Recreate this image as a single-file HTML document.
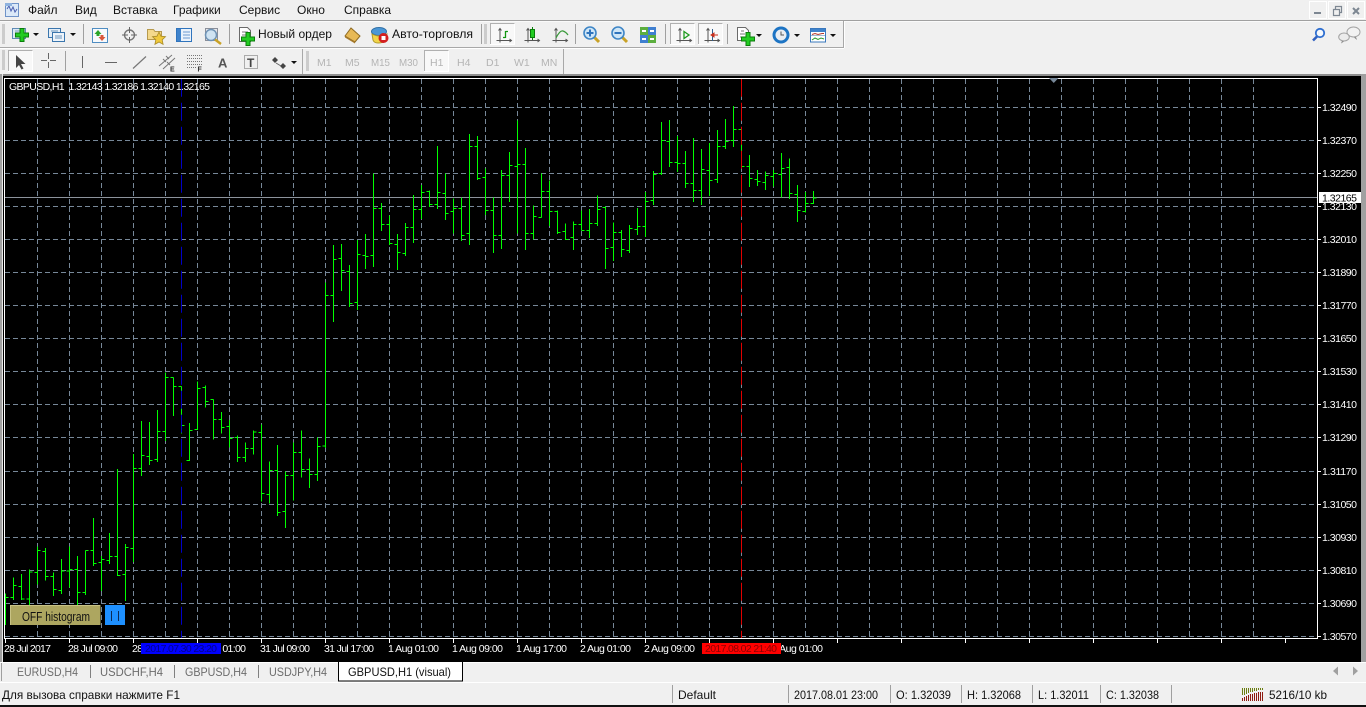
<!DOCTYPE html>
<html lang="ru"><head><meta charset="utf-8"><title>MetaTrader</title>
<style>
html,body{margin:0;padding:0;background:#f0f0f0;width:1366px;height:707px;overflow:hidden}
svg{display:block;position:absolute;left:0;top:0}
text{font-family:"Liberation Sans","Noto Sans CJK SC",sans-serif;white-space:pre}
.m{font-size:12px;fill:#111}
.w{font-size:10.500px;fill:#fff}
.t{font-size:12px;fill:#6c6c6c}
.s{font-size:12px;fill:#111}
.p{font-size:10.500px;fill:#b4b4b4}
.ax{fill:none;stroke:#555;stroke-width:1}
</style></head><body>
<svg width="1366" height="707" viewBox="0 0 1366 707" xmlns="http://www.w3.org/2000/svg">
<defs>
<path id="pl" d="M-2-6.5h4v4.5h4.5v4h-4.5v4.5h-4v-4.5h-4.5v-4h4.5z" fill="#22cc22" stroke="#0a7d0a"/>
<path id="ar" d="M0 0h6l-3 3z" fill="#111"/>
<path id="axi" d="M4 .5V14.5M.5 12.5H15.5M2.5 2.5L4 .5 5.5 2.5M13.5 11L15.5 12.5 13.5 14" fill="none" stroke="#555"/>
<g id="pressed"><rect x=".5" y=".5" width="24" height="21" fill="#f8f8f8" stroke="#fff"/><path d="M.5 21V.5H24.5" fill="none" stroke="#b0b0b0"/></g>
<g id="grip"><path d="M0 0h3M0 2h3M0 4h3M0 6h3M0 8h3M0 10h3M0 12h3M0 14h3M0 16h3M0 18h3" stroke="#a8a8a8" fill="none"/></g>
<g id="mag"><path d="M4 4L9 9" stroke="#c9a227" stroke-width="3"/><circle cx="0" cy="0" r="6" fill="#cfe6f7" stroke="#3f86c6" stroke-width="1.6"/></g>
</defs>

<!-- window chrome -->
<rect width="1366" height="707" fill="#f0f0f0"/>
<rect y="20" width="1366" height="1" fill="#a0a0a0"/>
<rect y="21" width="1366" height="1" fill="#fafafa"/>
<rect y="47" width="843" height="1" fill="#a8a8a8"/>
<rect x="843" y="21" width="1" height="27" fill="#a8a8a8"/>
<rect x="844" y="21" width="1" height="27" fill="#fff"/>
<rect y="48" width="844" height="1" fill="#fff"/>

<!-- app icon -->
<rect x="5.5" y="3.5" width="13" height="13" fill="#dbe9f8" stroke="#6f93c8"/>
<path d="M7 9l2-3 2 5 2-4 2 5 2-3" fill="none" stroke="#4a5fb0"/>
<rect x="5" y="3" width="7" height="3" fill="#8fb2de"/>

<!-- menu -->
<text class="m" x="28" y="14">Файл</text>
<text class="m" x="75" y="14">Вид</text>
<text class="m" x="113" y="14">Вставка</text>
<text class="m" x="173" y="14">Графики</text>
<text class="m" x="239" y="14">Сервис</text>
<text class="m" x="297" y="14">Окно</text>
<text class="m" x="344" y="14">Справка</text>

<!-- window buttons -->
<g fill="#f0f0f0" stroke="#fff" stroke-width="1">
<rect x="1309.5" y="1.5" width="17" height="17"/>
<rect x="1328.5" y="1.5" width="17" height="17"/>
<rect x="1347.5" y="1.5" width="17" height="17"/>
</g>
<rect x="1314" y="12" width="7" height="2" fill="#7d8792"/>
<path d="M1333.5 9.5h6v6h-6zM1335.5 9V6.5h6v6h-2" fill="none" stroke="#7d8792" stroke-width="1.2"/>
<path d="M1353 8l6 6M1359 8l-6 6" stroke="#7d8792" stroke-width="2"/>

<!-- toolbar 1 -->
<use href="#grip" x="2" y="25"/>
<rect x="12.5" y="28.5" width="13" height="10" fill="#dce9f5" stroke="#5f8ab5"/>
<path d="M15 31h8M15 34h5" stroke="#7a9cc0"/>
<use href="#pl" x="22" y="35"/>
<use href="#ar" x="33" y="33"/>
<rect x="48.5" y="28.5" width="12" height="9" fill="#e4eef8" stroke="#3b76ad"/>
<rect x="52.5" y="32.5" width="12" height="9" fill="#eef4fa" stroke="#3b76ad"/>
<path d="M51 31h7M55 36h7M55 38h7" stroke="#6c96bd"/>
<use href="#ar" x="70" y="33"/>
<rect x="83" y="24" width="1" height="20" fill="#a0a0a0"/>
<rect x="92.5" y="28.5" width="15" height="14" fill="#f7fafd" stroke="#4f8dc2"/>
<path d="M98 30l3.5 4h-2v2h-3v-2h-2z" fill="#2aa52a"/><path d="M102 41l-3.5-4h2v-2h3v2h2z" fill="#d9573b"/>
<circle cx="129.5" cy="35" r="5" fill="none" stroke="#777" stroke-width="1.4"/>
<path d="M129.5 27v6M129.5 37v6M122 35h6M131 35h6" stroke="#666"/>
<path d="M147.5 29.5h6l1.500 2h6.500v8h-14z" fill="#f4d98b" stroke="#b69a4e"/>
<path d="M159 32l2 4.200 4.500.5-3.300 3.100.9 4.500-4.100-2.300-4.100 2.300.9-4.500-3.300-3.100 4.500-.5z" fill="#f0c93c" stroke="#a88b28" stroke-width=".8"/>
<rect x="176.500" y="28.500" width="15" height="13" fill="#eaf2fb" stroke="#2f74bd" stroke-width="1"/>
<rect x="177" y="29" width="4" height="12" fill="#3f83cc"/>
<path d="M183 32h7M183 35h7M183 38h7" stroke="#6c9bd0"/>
<rect x="205.500" y="28.500" width="12" height="12" fill="#e8e8ec" stroke="#8a8f9a"/>
<circle cx="211" cy="35" r="5.500" fill="#cfe3f2" stroke="#6f93b5" stroke-width="1.500"/>
<path d="M215 39.500l6 4.500" stroke="#c9a227" stroke-width="2.500"/>
<rect x="229" y="24" width="1" height="20" fill="#a0a0a0"/>
<path d="M239.500 27.500h8l3 3v11h-11z" fill="#fff" stroke="#6b6b6b"/>
<path d="M242 32h6M242 35h6M242 38h4" stroke="#777"/>
<use href="#pl" x="248" y="39"/>
<text class="m" x="258" y="38" textLength="74" lengthAdjust="spacingAndGlyphs">Новый ордер</text>
<path d="M345 36l6-8 9 8-5 6z" fill="#e7b956" stroke="#8e6a22"/>
<path d="M345 36l10 6v1.500l-10-6z" fill="#a6792c"/>
<ellipse cx="379" cy="31.500" rx="7.500" ry="4" fill="#4b97d6" stroke="#2f6fa6"/>
<path d="M372 34q7 4 15 0l-1 6q-3 3-8 3-4 0-5-3z" fill="#f1d54a" stroke="#b19a2c"/>
<circle cx="383.500" cy="38" r="5" fill="#d31f1f"/><rect x="381.500" y="36" width="4" height="4" fill="#fff"/>
<text class="m" x="392" y="38" textLength="81" lengthAdjust="spacingAndGlyphs">Авто-торговля</text>
<rect x="481" y="24" width="1" height="20" fill="#a0a0a0"/>
<use href="#grip" x="484" y="25"/>
<use href="#pressed" x="490" y="23"/>
<use href="#axi" x="496" y="28"/>
<path d="M505.500 31v7M503 37.500h2.500M505.500 31.500h2.500" stroke="#129612" fill="none" stroke-width="1.300"/>
<use href="#axi" x="524" y="28"/>
<path d="M532.500 27v13" stroke="#0a7d0a"/><rect x="530.500" y="29.500" width="4" height="8" fill="#22cc22" stroke="#0a7d0a"/>
<use href="#axi" x="552" y="28"/>
<path d="M556 38q4-8 7-7t5 4" fill="none" stroke="#3a9a3a" stroke-width="1.200"/>
<rect x="575" y="24" width="1" height="20" fill="#a0a0a0"/>
<use href="#mag" x="590" y="33"/>
<path d="M586.500 33h7M590 29.500v7" stroke="#2f74bd" stroke-width="2"/>
<use href="#mag" x="618" y="33"/>
<path d="M614.500 33h7" stroke="#2f74bd" stroke-width="2"/>
<rect x="640" y="27" width="8" height="8" fill="#5cae3e"/><rect x="648" y="27" width="8" height="8" fill="#3f7fd0"/>
<rect x="640" y="35" width="8" height="8" fill="#3f7fd0"/><rect x="648" y="35" width="8" height="8" fill="#5cae3e"/>
<path d="M642 31h4M650 31h4M642 39h4M650 39h4" stroke="#fff" stroke-width="2"/>
<rect x="665" y="24" width="1" height="20" fill="#a0a0a0"/>
<use href="#pressed" x="670" y="23"/>
<use href="#axi" x="676" y="28"/>
<path d="M684 31.500l5 3.500-5 3.500z" fill="none" stroke="#1f9a1f" stroke-width="1.300"/>
<use href="#pressed" x="698" y="23"/>
<use href="#axi" x="704" y="28"/>
<path d="M712.500 29v12" stroke="#2f5f8f"/><path d="M718 35h-4M714 33l-3 2 3 2z" fill="#c8311e" stroke="#c8311e"/>
<rect x="727" y="24" width="1" height="20" fill="#a0a0a0"/>
<path d="M737.500 27.500h8l3 3v10h-11z" fill="#fff" stroke="#6b6b6b"/>
<path d="M741 31h3M740 34h5M740 37h4" stroke="#777"/>
<use href="#pl" x="748" y="39"/>
<use href="#ar" x="756" y="34"/>
<circle cx="781" cy="35" r="8.500" fill="#1d74c4"/><circle cx="781" cy="35" r="5.500" fill="#e9edf2"/>
<path d="M781 31.500V35h3" fill="none" stroke="#555"/>
<use href="#ar" x="794" y="34"/>
<rect x="810.500" y="28.500" width="15" height="13.500" fill="#fff" stroke="#3a78bd"/>
<rect x="811" y="29" width="14" height="3" fill="#3f83cc"/>
<path d="M811 35.500h14" stroke="#9fb8d3"/>
<path d="M812 34.500l3-1 3 1 4-1 2 0" fill="none" stroke="#b5382a"/>
<path d="M812 40l3-2 3 1.500 3-1.500 3 1" fill="none" stroke="#2c9b2c"/>
<use href="#ar" x="830" y="34"/>

<!-- search and chat -->
<circle cx="1320" cy="33" r="4.200" fill="#f4f8fd" stroke="#2f6fd0" stroke-width="1.800"/>
<path d="M1317 36.500l-4 4" stroke="#2f5fc0" stroke-width="2.600"/>
<ellipse cx="1353.500" cy="32" rx="6.500" ry="5" fill="#f2f2f2" stroke="#a2a2a2"/>
<path d="M1356 37l1 3-3-2.500z" fill="#888"/>
<ellipse cx="1344" cy="37" rx="5.300" ry="4" fill="#ececec" stroke="#a2a2a2"/>
<path d="M1342 41l-1 2.500 3-2z" fill="#888"/>

<!-- toolbar 2 -->
<use href="#grip" x="2" y="51"/>
<use href="#pressed" x="8" y="50"/>
<path d="M16 55v13l3-3 2.500 4.500 2-1-2.500-4.500h4.500z" fill="#444"/>
<path d="M48.500 53v6M48.500 62v6M41 60.500h6M50 60.500h6" stroke="#666"/>
<rect x="65" y="51" width="1" height="20" fill="#a0a0a0"/>
<path d="M82.500 56v12" stroke="#666"/>
<path d="M105 62.500h12" stroke="#666"/>
<path d="M133 68.500l13-12" stroke="#777" stroke-width="1.200"/>
<path d="M159 66l13-11M163 69l12-11M163 59l3 3M166 56l3 3M167 62l3 3" stroke="#777" fill="none"/>
<text x="170" y="71.500" font-weight="700" fill="#333" style="font-size:7px">E</text>
<path d="M187 55.500h15M187 58.500h15M187 61.500h15M187 64.500h15M187 67.500h10" stroke="#777" stroke-dasharray="1 1"/>
<text x="197.500" y="71.500" font-weight="700" fill="#333" style="font-size:7px">F</text>
<text x="218" y="67.500" font-weight="700" fill="#555" style="font-size:13px">A</text>
<rect x="244.500" y="55.500" width="13" height="13" fill="none" stroke="#666" stroke-dasharray="1 1"/>
<text x="247" y="67" font-weight="700" fill="#444" style="font-size:12px">T</text>
<path d="M272 60l3-3 3 3-3 3zM280 66l3-3 3 3-3 3z" fill="#444"/>
<path d="M276 63l5 3" stroke="#666"/>
<use href="#ar" x="291" y="61"/>
<rect x="302" y="49" width="1" height="25" fill="#a8a8a8"/>
<use href="#grip" x="306" y="52"/>
<text class="p" x="317" y="66">M1</text>
<text class="p" x="345" y="66">M5</text>
<text class="p" x="371" y="66" textLength="19" lengthAdjust="spacingAndGlyphs">M15</text>
<text class="p" x="399" y="66" textLength="19" lengthAdjust="spacingAndGlyphs">M30</text>
<use href="#pressed" x="424" y="50"/>
<text class="p" x="430" y="66">H1</text>
<text class="p" x="457" y="66">H4</text>
<text class="p" x="486" y="66">D1</text>
<text class="p" x="514" y="66">W1</text>
<text class="p" x="541" y="66">MN</text>
<rect x="563" y="49" width="1" height="25" fill="#a8a8a8"/>

<!-- chart frame -->
<rect y="74" width="1366" height="2" fill="#8f8f8f"/>
<rect x="0" y="76" width="1366" height="586" fill="#000"/>
<rect x="0" y="74" width="2" height="588" fill="#a0a0a0"/>
<rect x="2" y="74" width="1" height="588" fill="#e8e8e8"/>
<rect x="1361" y="74" width="5" height="588" fill="#a0a0a0"/>

<!-- grid -->
<g fill="none" stroke="#778899" stroke-width="1" stroke-dasharray="5 3">
<path d="M5 107.500H1317M5 140.500H1317M5 173.500H1317M5 206.500H1317M5 239.500H1317M5 272.500H1317M5 305.500H1317M5 338.500H1317M5 371.500H1317M5 404.500H1317M5 437.500H1317M5 471.500H1317M5 504.500H1317M5 537.500H1317M5 570.500H1317M5 603.500H1317M5 636.500H1317"/>
<path d="M37.500 79V638m32-559V638m32-559V638m32-559V638m32-559V638m32-559V638m32-559V638m32-559V638m32-559V638m32-559V638m32-559V638m32-559V638m32-559V638m32-559V638m32-559V638m32-559V638m32-559V638m32-559V638m32-559V638m32-559V638m32-559V638m32-559V638m32-559V638m32-559V638m32-559V638m32-559V638m32-559V638m32-559V638m32-559V638m32-559V638m32-559V638m32-559V638m32-559V638m32-559V638m32-559V638m32-559V638m32-559V638m32-559V638m32-559V638"/>
</g>
<rect x="5" y="197" width="1312" height="1" fill="#8c939c"/>

<!-- bars -->
<g fill="none" stroke="#00ff00" stroke-width="3" shape-rendering="crispEdges">
<path transform="translate(0 360) scale(.33333)" d="M16 700V795M16 712H25M40 652V720M31 712H40M40 676H49M64 642V720M55 679H64M64 717H73M88 628V735M79 717H88M88 636H97M112 559V674M103 637H112M112 571H121M136 564V662M127 574H136M136 649H145M160 637V708M151 649H160M160 688H169M184 597V702M175 691H184M184 633H193M208 559V682M199 633H208M208 628H217M232 588V735M223 628H232M232 697H241M256 571V705M247 697H256M256 571H265M280 474V618M271 571H280M280 610H289M304 588V693M295 607H304M304 598H313M328 519V612M319 601H328M328 589H337M352 327V648M343 589H352M352 646H361M376 552V723M367 643H376M376 562H385M400 282V606M391 565H400M400 325H409M424 183V348M415 325H424M424 286H433M448 186V315M439 289H448M448 301H457M472 150V306M463 298H472M472 214H481M496 38V243M487 214H496M496 52H505M520 52V168M511 52H520M520 79H529M544 79V220M535 79H544M544 196H553M568 189V303M559 301H568M568 211H577M592 64V210M583 208H592M592 85H601M616 76V142M607 82H616M616 124H625M640 118V238M631 118H640M640 178H649M664 156V220M655 178H664M664 202H673M688 180V262M679 199H688M688 235H697M712 226V306M703 232H712M712 292H721M736 247V306M727 292H736M736 265H745M760 211V283M751 265H760M760 216H769M784 193V424M775 217H784M784 400H793M808 304V430M799 403H808M808 331H817M832 255V468M823 331H832M832 457H841M856 334V504M847 454H856M856 346H865M880 247V422M871 346H880M880 277H889M904 211V352M895 277H904M904 328H913M928 295V384M919 328H928M928 343H937M952 232V363M943 343H952M952 259H961"/>
<path transform="translate(320 100) scale(.33333)" d="M16 547V1044M7 1038H16M16 586H25M40 435V666M31 586H40M40 478H49M64 432V573M55 475H64M64 512H73M88 495V621M79 515H88M88 610H97M112 420V630M103 607H112M112 463H121M136 402V507M127 466H136M136 469H145M160 220V501M151 466H160M160 325H169M184 309V393M175 325H184M184 373H193M208 346V435M199 373H208M208 430H217M232 402V510M223 433H232M232 457H241M256 369V468M247 460H256M256 382H265M280 285V429M271 382H280M280 328H289M304 255V357M295 328H304M304 277H313M328 271V321M319 274H328M328 313H337M352 138V327M343 313H352M352 277H361M376 220V360M367 280H376M376 340H385M400 295V400M391 334H400M400 325H409M424 292V423M415 325H424M424 406H433M448 102V435M439 400H448M448 139H457M472 108V240M463 139H472M472 235H481M496 205V345M487 232H496M496 331H505M520 292V459M511 331H520M520 406H529M544 210V447M535 406H544M544 226H553M568 156V306M559 226H568M568 196H577M592 61V400M583 199H592M592 193H601M616 144V450M607 193H616M616 400H625M640 316V418M631 400H640M640 349H649M664 220V352M655 352H664M664 274H673M688 241V378M679 274H688M688 334H697M712 331V402M703 334H712M712 397H721M736 370V420M727 394H736M736 418H745M760 364V450M751 412H760M760 373H769"/>
<path transform="translate(580 90) scale(.33333)" d="M4 361V421M-5 403H4M4 421H13M28 357V444M19 421H28M28 400H37M52 316V408M43 400H52M52 358H61M76 349V537M67 352H76M76 475H85M100 397V513M91 472H100M100 427H109M124 420V501M115 427H124M124 478H133M148 405V489M139 481H148M148 415H157M172 354V435M163 418H172M172 409H181M196 306V441M187 409H196M196 334H205M220 243V345M211 331H220M220 253H229M244 96V255M235 250H244M244 151H253M268 90V231M259 154H268M268 217H277M292 138V246M283 217H292M292 220H301M316 183V294M307 220H316M316 280H325M340 144V336M331 280H340M340 301H349M364 177V345M355 301H364M364 238H373M388 159V318M379 241H388M388 271H397M412 120V279M403 268H412M412 169H421M436 87V177M427 169H436M436 154H445M460 48V171M451 151H460M460 118H469M484 118V232M475 118H484M484 229H493M508 195V291M499 229H508M508 265H517M532 240V288M523 268H532M532 274H541M556 244V300M547 277H556M556 256H565M580 240V290M571 259H580M580 250H589M604 189V322M595 253H604M604 235H613M628 205V327M619 232H628M628 310H637M652 285V396M643 313H652M652 361H661M676 306V368M667 364H676M676 340H685M700 303V342M691 340H700M700 324H709"/>
</g>

<!-- vertical lines -->
<path d="M181.500 78.700V638" stroke="#0000c8" stroke-dasharray="18 6" fill="none"/>
<path d="M741.500 78.700V638" stroke="#e00000" stroke-dasharray="18 6" fill="none"/>

<!-- frame -->
<rect x="4.500" y="78.500" width="1313" height="560" fill="none" stroke="#fff"/>
<path d="M1049 78h9.500l-4.750 5z" fill="#778899"/>
<path d="M1318 107.500h3M1318 140.500h3M1318 173.500h3M1318 206.500h3M1318 239.500h3M1318 272.500h3M1318 305.500h3M1318 338.500h3M1318 371.500h3M1318 404.500h3M1318 437.500h3M1318 471.500h3M1318 504.500h3M1318 537.500h3M1318 570.500h3M1318 603.500h3M1318 636.500h3" stroke="#fff"/>
<path d="M5.500 639v4m64-4v4m64-4v4m64-4v4m64-4v4m64-4v4m64-4v4m64-4v4m64-4v4m64-4v4m64-4v4m64-4v4m64-4v4m64-4v4m64-4v4m64-4v4m64-4v4m64-4v4m64-4v4m64-4v4m64-4v4" stroke="#fff"/>

<!-- price labels -->
<text class="w" x="1322" y="111" textLength="35">1.32490</text>
<text class="w" x="1322" y="144" textLength="35">1.32370</text>
<text class="w" x="1322" y="177" textLength="35">1.32250</text>
<text class="w" x="1322" y="210" textLength="35">1.32130</text>
<text class="w" x="1322" y="243" textLength="35">1.32010</text>
<text class="w" x="1322" y="276" textLength="35">1.31890</text>
<text class="w" x="1322" y="309" textLength="35">1.31770</text>
<text class="w" x="1322" y="342" textLength="35">1.31650</text>
<text class="w" x="1322" y="375" textLength="35">1.31530</text>
<text class="w" x="1322" y="408" textLength="35">1.31410</text>
<text class="w" x="1322" y="441" textLength="35">1.31290</text>
<text class="w" x="1322" y="475" textLength="35">1.31170</text>
<text class="w" x="1322" y="508" textLength="35">1.31050</text>
<text class="w" x="1322" y="541" textLength="35">1.30930</text>
<text class="w" x="1322" y="574" textLength="35">1.30810</text>
<text class="w" x="1322" y="607" textLength="35">1.30690</text>
<text class="w" x="1322" y="640" textLength="35">1.30570</text>
<rect x="1319" y="192" width="42" height="11" fill="#fff"/>
<text x="1322" y="201.500" textLength="35" style="font-size:10.500px" fill="#000">1.32165</text>

<!-- time labels -->
<text class="w" x="4" y="652" textLength="47">28 Jul 2017</text>
<text class="w" x="68" y="652" textLength="50">28 Jul 09:00</text>
<text class="w" x="132" y="652" textLength="50">28 Jul 17:00</text>
<text class="w" x="196" y="652" textLength="50">31 Jul 01:00</text>
<text class="w" x="260" y="652" textLength="50">31 Jul 09:00</text>
<text class="w" x="324" y="652" textLength="50">31 Jul 17:00</text>
<text class="w" x="388" y="652" textLength="51">1 Aug 01:00</text>
<text class="w" x="452" y="652" textLength="51">1 Aug 09:00</text>
<text class="w" x="516" y="652" textLength="51">1 Aug 17:00</text>
<text class="w" x="580" y="652" textLength="51">2 Aug 01:00</text>
<text class="w" x="644" y="652" textLength="51">2 Aug 09:00</text>
<text class="w" x="772" y="652" textLength="51">3 Aug 01:00</text>
<rect x="141" y="643" width="80" height="11" fill="#0000ff"/>
<text x="145" y="652" textLength="72" style="font-size:10.500px" fill="#00008b">2017.07.30 23:20</text>
<rect x="702" y="643" width="79" height="11" fill="#ff0000"/>
<text x="705" y="652" textLength="72" style="font-size:10.500px" fill="#8b0000">2017.08.02 21:40</text>

<!-- chart text & buttons -->
<text class="w" x="9" y="90" textLength="201">GBPUSD,H1  1.32143 1.32186 1.32140 1.32165</text>
<rect x="10" y="605" width="90.500" height="20" fill="#ada660"/>
<path d="M10.500 625V605.500H100" stroke="#c8c284" fill="none"/>
<text x="22" y="621" textLength="68" lengthAdjust="spacingAndGlyphs" style="font-size:13px" fill="#111">OFF histogram</text>
<rect x="105" y="605" width="20" height="20" fill="#1e90ff"/>
<path d="M111.500 611v10M118.500 611v10" stroke="#0b2a55"/>

<!-- tabs -->
<rect y="662" width="1366" height="1" fill="#fff"/>
<rect x="1" y="663" width="1" height="18" fill="#a0a0a0"/>
<text class="t" x="17" y="676" textLength="61" lengthAdjust="spacingAndGlyphs">EURUSD,H4</text>
<rect x="90" y="665" width="1" height="13" fill="#808080"/>
<text class="t" x="100" y="676" textLength="63" lengthAdjust="spacingAndGlyphs">USDCHF,H4</text>
<rect x="174" y="665" width="1" height="13" fill="#808080"/>
<text class="t" x="185" y="676" textLength="62" lengthAdjust="spacingAndGlyphs">GBPUSD,H4</text>
<rect x="258" y="665" width="1" height="13" fill="#808080"/>
<text class="t" x="269" y="676" textLength="58" lengthAdjust="spacingAndGlyphs">USDJPY,H4</text>
<rect x="338" y="662" width="124" height="19" fill="#fff"/>
<path d="M338.500 662V681H462.500V662" fill="none" stroke="#000"/>
<text x="348" y="676" textLength="103" lengthAdjust="spacingAndGlyphs" style="font-size:12px" fill="#111">GBPUSD,H1 (visual)</text>
<path d="M1333 671l5-4.500v9z" fill="#a0a0a0"/>
<path d="M1353 666.500l5 4.500-5 4.500z" fill="#a0a0a0"/>

<!-- status -->
<rect y="682" width="1366" height="1" fill="#fff"/>
<text class="s" x="2" y="699" textLength="178" lengthAdjust="spacingAndGlyphs">Для вызова справки нажмите F1</text>
<g fill="#a0a0a0">
<rect x="672" y="685" width="1" height="18"/><rect x="788" y="685" width="1" height="18"/>
<rect x="890" y="685" width="1" height="18"/><rect x="961" y="685" width="1" height="18"/>
<rect x="1032" y="685" width="1" height="18"/><rect x="1100" y="685" width="1" height="18"/>
<rect x="1171" y="685" width="1" height="18"/>
</g>
<text class="s" x="678" y="699" textLength="38" lengthAdjust="spacingAndGlyphs">Default</text>
<text class="s" x="794" y="699" textLength="84" lengthAdjust="spacingAndGlyphs">2017.08.01 23:00</text>
<text class="s" x="896" y="699" textLength="55" lengthAdjust="spacingAndGlyphs">O: 1.32039</text>
<text class="s" x="967" y="699" textLength="54" lengthAdjust="spacingAndGlyphs">H: 1.32068</text>
<text class="s" x="1038" y="699" textLength="51" lengthAdjust="spacingAndGlyphs">L: 1.32011</text>
<text class="s" x="1106" y="699" textLength="53" lengthAdjust="spacingAndGlyphs">C: 1.32038</text>
<path d="M1242.500 688v7M1244.500 688v7M1246.500 688v6M1248.500 688v5M1250.500 688v4M1252.500 688v4M1254.500 688v3M1256.500 688v3M1258.500 688v2M1260.500 688v2M1262.500 688v2" stroke="#6b7d10"/>
<path d="M1242.500 698v3M1244.500 697v4M1246.500 696v5M1248.500 695v6M1250.500 694v7M1252.500 694v7M1254.500 693v8M1256.500 693v8M1258.500 692v9M1260.500 692v9M1262.500 692v9" stroke="#8f1a10"/>
<text class="s" x="1269" y="699" textLength="58" lengthAdjust="spacingAndGlyphs">5216/10 kb</text>
<rect y="705" width="1366" height="2" fill="#111"/>
</svg>
</body></html>
